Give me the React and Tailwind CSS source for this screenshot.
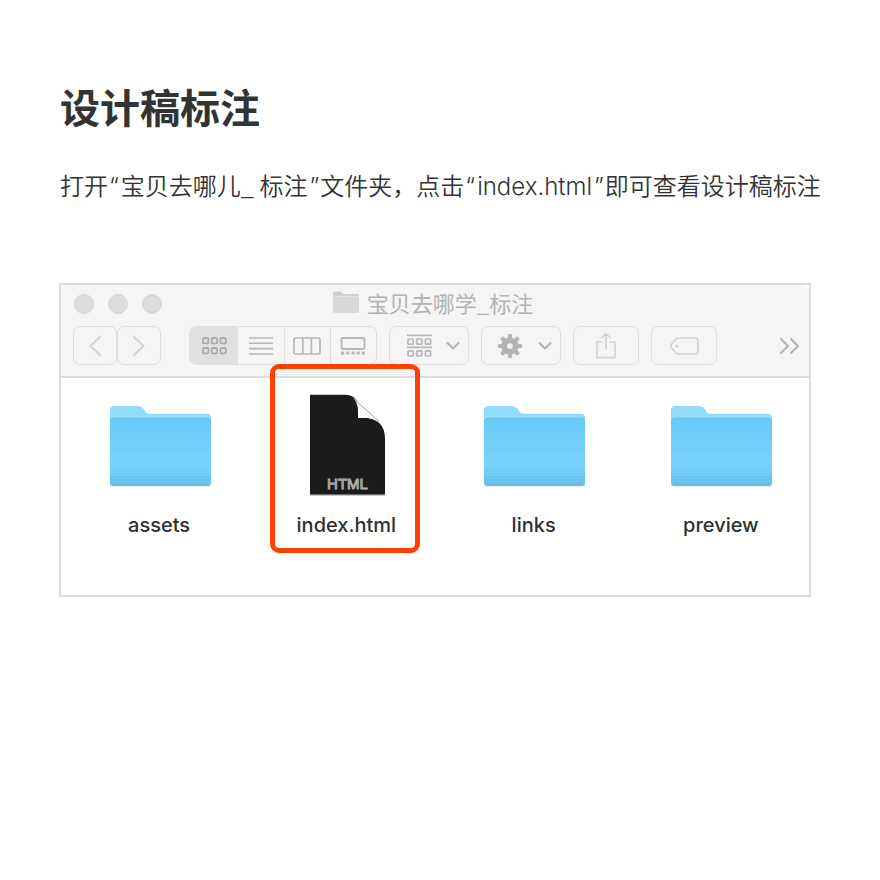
import React from "react";

const stroke = { fill: "none", strokeLinecap: "round", strokeLinejoin: "round" };

function Chevron({ d, width, height, color = "#d2d2d2" }) {
  return (
    <svg width={width} height={height} viewBox={`0 0 ${width} ${height}`} {...stroke} stroke={color} strokeWidth="2.2">
      <path d={d} />
    </svg>
  );
}

function DownArrow() {
  return <Chevron width={14} height={10} d="M1.5 2 7 7.5 12.5 2" color="#b4b4b4" />;
}

function GridIcon() {
  return (
    <svg width="25" height="18" viewBox="0 0 25 18" fill="none" stroke="#aaaaaa" strokeWidth="1.8">
      {[1, 11].map((y) =>
        [1, 9.7, 18.4].map((x) => <rect key={`${x}-${y}`} x={x} y={y} width="5.400" height="5.400" rx="1" />)
      )}
    </svg>
  );
}

function ListIcon() {
  return (
    <svg width="24" height="18" viewBox="0 0 24 18" stroke="#b6b6b6" strokeWidth="1.6">
      <path d="M0 1h24M0 6.3h24M0 11.6h24M0 17h24" />
    </svg>
  );
}

function ColumnsIcon() {
  return (
    <svg width="28" height="18" viewBox="0 0 28 18" fill="none" stroke="#b6b6b6" strokeWidth="1.7">
      <rect x="1" y="1" width="26" height="16" rx="1.5" />
      <path d="M9.8 1v16M18.4 1v16" />
    </svg>
  );
}

function GalleryIcon() {
  return (
    <svg width="26" height="18" viewBox="0 0 26 18" fill="none" stroke="#b6b6b6" strokeWidth="1.8">
      <rect x="1.5" y="1" width="23" height="11" rx="1.5" />
      <path d="M1 16h24" strokeWidth="3" strokeDasharray="3.2 2" />
    </svg>
  );
}

function GroupIcon() {
  return (
    <svg width="25" height="24" viewBox="0 0 25 24" fill="none" stroke="#b6b6b6" strokeWidth="1.7">
      <path d="M0 1.3h25M0 13.3h25" />
      {[5, 16.8].map((y) =>
        [1, 9.7, 18.4].map((x) => <rect key={`${x}-${y}`} x={x} y={y} width="5.2" height="5.2" rx="1" />)
      )}
    </svg>
  );
}

function GearIcon() {
  return (
    <svg width="24" height="24" viewBox="-12 -12 24 24">
      {[0, 45, 90, 135].map((angle) => (
        <rect key={angle} x="-2.1" y="-12" width="4.2" height="24" rx="1" fill="#b4b4b4" transform={`rotate(${angle})`} />
      ))}
      <circle r="8.6" fill="#b4b4b4" />
      <circle r="2.8" fill="#f5f5f5" />
    </svg>
  );
}

function ShareIcon() {
  return (
    <svg width="20" height="27" viewBox="0 0 20 27" {...stroke} stroke="#d2d2d2" strokeWidth="1.6">
      <path d="M6 10H1v15.6h18V10h-5M10 17V1.5M5.5 6 10 1.5 14.5 6" />
    </svg>
  );
}

function TagIcon() {
  return (
    <svg width="29" height="18" viewBox="0 0 29 18" {...stroke} stroke="#d2d2d2" strokeWidth="1.7">
      <path d="M8.5 1H25.5a2.4 2.4 0 0 1 2.4 2.4v11.2a2.4 2.4 0 0 1-2.4 2.4H8.5Q7 17 5.8 15.8L1.6 11Q.2 9 1.6 7L5.8 2.2Q7 1 8.5 1Z" />
      <circle cx="7" cy="9" r="1.6" fill="#d2d2d2" stroke="none" />
    </svg>
  );
}

function SmallFolder() {
  return (
    <svg width="26" height="22" viewBox="0 0 26 22">
      <path d="M0 2q0-1.5 1.5-1.5H8L10.5 3H24.5Q26 3 26 4.5V20q0 1.5-1.5 1.5h-23Q0 21.500 0 20Z" fill="#d0d0d0" />
      <path d="M0 6h26v14q0 1.500-1.500 1.500h-23Q0 21.500 0 20Z" fill="#d8d8d8" />
      <path d="M.5 5.500h25" stroke="#e2e2e2" />
    </svg>
  );
}

function FolderIcon() {
  return (
    <svg width="103" height="83" viewBox="0 0 103 83">
      <defs>
        <linearGradient id="folderFront" x1="0" y1="0" x2="0" y2="1">
          <stop offset="0" stopColor="#68caf7" />
          <stop offset=".7" stopColor="#7ad3fc" />
          <stop offset="1" stopColor="#6ac3ee" />
        </linearGradient>
      </defs>
      <path d="M1 78V20h101V80q0 2.500-3 2.500H4Q1 82.500 1 80Z" fill="#b9c9d2" opacity=".55" />
      <path d="M1 76V6.500Q1 2 5.500 2H29q3.500 0 5.500 2.700l2.500 3.500q1.200 1.500 3.500 1.500H98q4 0 4 4V78Z" fill="#93dbfd" />
      <path d="M1 18q0-4 4-4h93q4 0 4 4v60.500q0 3-3 3H4q-3 0-3-3Z" fill="url(#folderFront)" />
      <path d="M1.500 18q0-3.700 3.700-3.700h92.600q3.700 0 3.700 3.700" fill="none" stroke="#62bfea" strokeWidth=".8" />
      <path d="M1 73h101M1 76h101M1 79h101" stroke="#5cb6df" strokeWidth=".9" opacity=".75" />
      <path d="M2.500 81.200h98" stroke="#5baed4" strokeWidth=".9" />
    </svg>
  );
}

function HtmlFileIcon() {
  return (
    <svg width="78" height="103" viewBox="0 0 78 103">
      <defs>
        <linearGradient id="pageCurl" x1="0" y1="1" x2="1" y2="0">
          <stop offset="0" stopColor="#ffffff" />
          <stop offset=".5" stopColor="#ffffff" />
          <stop offset="1" stopColor="#d8d8d8" />
        </linearGradient>
      </defs>
      <path d="M2 90H77V102H2Z" fill="#000" opacity=".22" />
      <path d="M2 .7H37Q50 1 50 14V24Q77 22 77 45V100.500H2Z" fill="#1b1b1b" />
      <path d="M46 5 71 27.500Q63 22.500 50 24V16Q50 10 46 5Z" fill="url(#pageCurl)" />
      <path d="M45.500 4.500 71 27.500" fill="none" stroke="#9a9a9a" strokeWidth="1" />
      <text x="39.500" y="95" textAnchor="middle" className="font-['Liberation_Sans'] text-[15px]" fill="#686868" stroke="#b0b0b0" strokeWidth="1">
        HTML
      </text>
    </svg>
  );
}

function ToolButton({ label, className, children }) {
  return (
    <button
      type="button"
      aria-label={label}
      className={`flex h-[39px] shrink-0 items-center justify-center rounded-[7px] border border-[#dfdfdf] ${className}`}
    >
      {children}
    </button>
  );
}

const views = [
  { label: "图标", icon: GridIcon, className: "w-12 bg-[#e1e1e1]" },
  { label: "列表", icon: ListIcon, className: "w-[46px]" },
  { label: "分栏", icon: ColumnsIcon, className: "w-[46px] border-l border-[#dfdfdf] pr-[2px]" },
  { label: "画廊", icon: GalleryIcon, className: "w-[46px] border-l border-[#dfdfdf] pr-[2px]" },
];

const files = [
  { name: "assets", icon: FolderIcon },
  { name: "index.html", icon: HtmlFileIcon, highlighted: true },
  { name: "links", icon: FolderIcon },
  { name: "preview", icon: FolderIcon },
];

function TitleBar() {
  return (
    <div className="grid h-[37px] grid-cols-[1fr_auto_1fr] items-center pr-[17px] pl-[13px]">
      <div className="flex gap-[14px]">
        {[0, 1, 2].map((n) => (
          <span key={n} className="size-5 rounded-full border border-[#d4d4d4] bg-[#dcdcdc]" />
        ))}
      </div>
      <h2 className="flex items-center gap-2 pb-[3px] font-['Noto_Sans_CJK_SC',sans-serif] text-[22px] leading-8 text-[#b2b2b2]">
        <SmallFolder />
        宝贝去哪学_标注
      </h2>
    </div>
  );
}

function Toolbar() {
  return (
    <div className="mt-1 flex items-center px-3">
      <ToolButton label="后退" className="w-11">
        <Chevron width={14} height={22} d="M12 2 2.500 11 12 20" />
      </ToolButton>
      <ToolButton label="前进" className="mr-7 w-11">
        <Chevron width={14} height={22} d="M2 2 11.500 11 2 20" />
      </ToolButton>
      <div className="mr-3 flex h-[39px] shrink-0 overflow-hidden rounded-[7px] border border-[#dfdfdf]">
        {views.map(({ label, icon: Icon, className }) => (
          <button key={label} type="button" aria-label={label} className={`flex items-center justify-center ${className}`}>
            <Icon />
          </button>
        ))}
      </div>
      <ToolButton label="分组" className="mr-3 w-20 gap-[14px] pl-2">
        <GroupIcon />
        <DownArrow />
      </ToolButton>
      <ToolButton label="操作" className="mr-3 w-20 gap-4 pl-2">
        <GearIcon />
        <DownArrow />
      </ToolButton>
      <ToolButton label="共享" className="mr-3 w-[66px]">
        <ShareIcon />
      </ToolButton>
      <ToolButton label="标签" className="w-[66px]">
        <TagIcon />
      </ToolButton>
      <button type="button" aria-label="更多" className="-mr-1 ml-auto">
        <Chevron width={22} height={18} d="M2 2 9 9 2 16M12 2 19 9 12 16" color="#b4b4b4" />
      </button>
    </div>
  );
}

function FileItem({ name, icon: Icon, highlighted }) {
  return (
    <button type="button" className="relative flex flex-col items-center">
      <span className="flex h-[103px] items-center">
        <Icon />
      </span>
      <span className="mt-[15px] pr-[2px] text-[20px] leading-[26px] font-medium text-[#303030]">{name}</span>
      {highlighted && (
        <span className="absolute -top-[30px] right-[3px] -bottom-[15px] -left-[2px] rounded-[9px] border-5 border-[#ff4000]" />
      )}
    </button>
  );
}

function Quoted({ children }) {
  return (
    <span className="px-[1px]">
      “<span className="px-[2px]">{children}</span>”
    </span>
  );
}

export default function App() {
  return (
    <main className="min-h-screen bg-white px-[59px] pt-[81px] font-['Inter','Noto_Sans_CJK_SC',sans-serif] text-[#333333]">
      <h1 className="pl-[1px] text-[40px] leading-[56px] font-bold">设计稿标注</h1>
      <p className="mt-[30px] pl-[1px] text-[24px] leading-9 font-[350] whitespace-nowrap">
        打开
        <Quoted>
          <span className="font-['Noto_Sans_CJK_SC',sans-serif]">宝贝去哪儿_ 标注</span>
        </Quoted>
        文件夹，点击<Quoted>index.html</Quoted>即可查看设计稿标注
      </p>
      <section className="mt-[78px] mr-[10px] border-2 border-[#dcdcdc] bg-white">
        <header className="h-[93px] rounded-t-[6px] border-b-2 border-[#dcdcdc] bg-[#f5f5f5]">
          <TitleBar />
          <Toolbar />
        </header>
        <div className="grid grid-cols-4 gap-x-[37px] pt-4 pr-3 pb-[57px] pl-6">
          {files.map((file) => (
            <FileItem key={file.name} {...file} />
          ))}
        </div>
      </section>
    </main>
  );
}
